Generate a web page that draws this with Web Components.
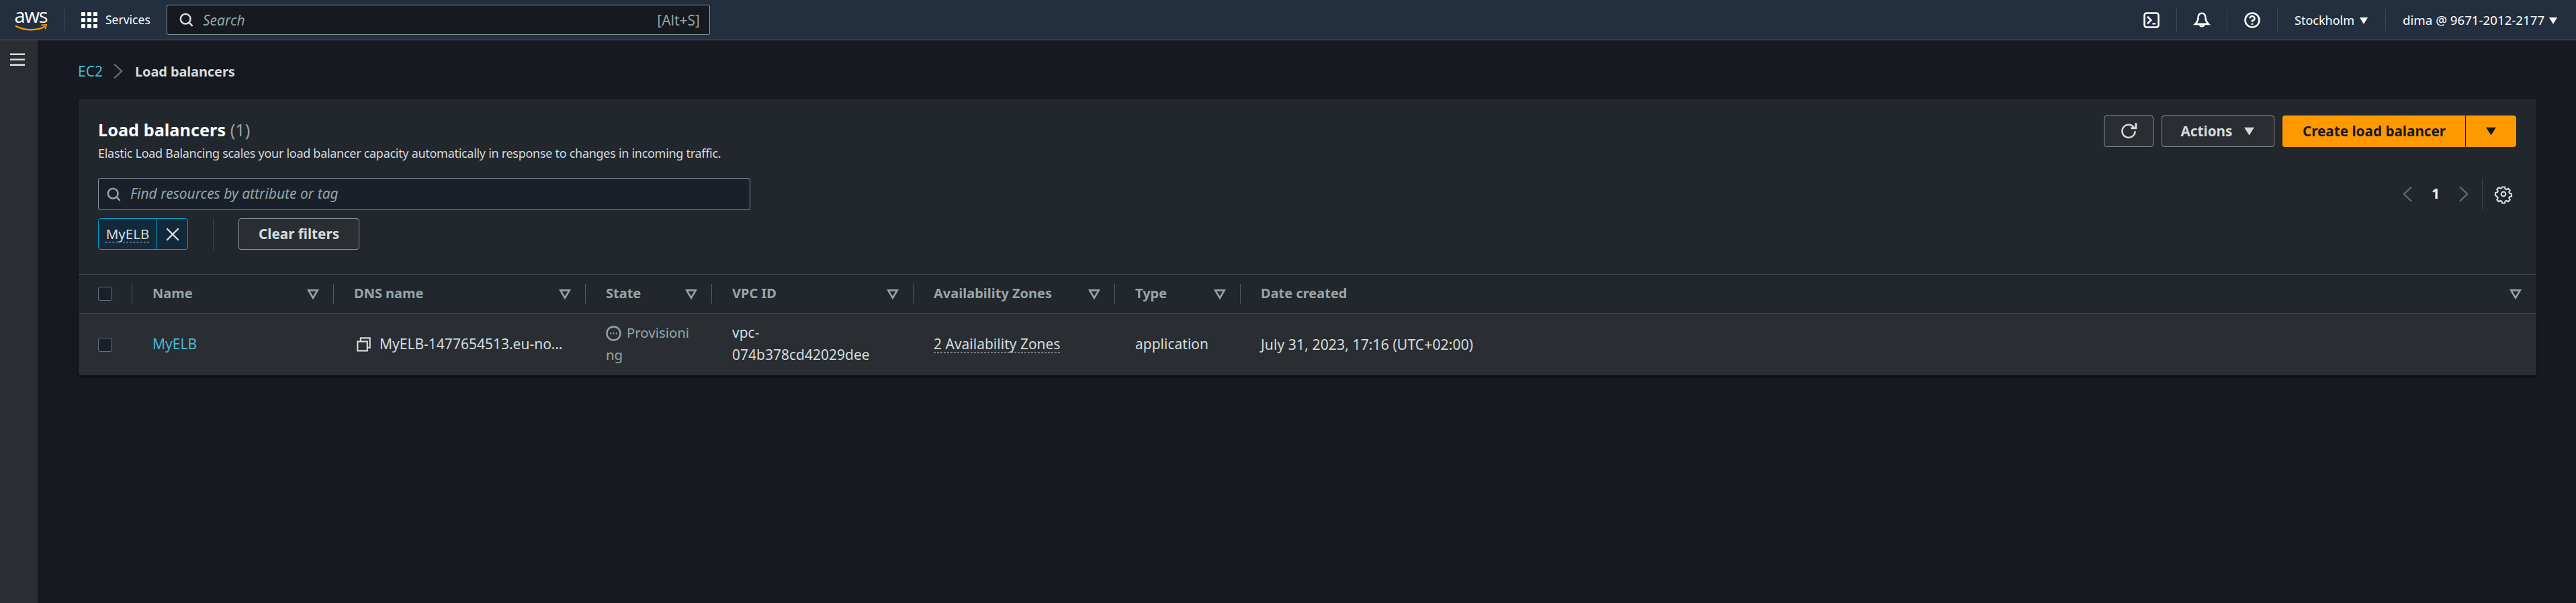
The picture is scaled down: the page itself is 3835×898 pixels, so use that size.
<!DOCTYPE html>
<html><head><meta charset="utf-8"><title>Load balancers</title>
<style>
html,body{margin:0;height:100%;background:#16191f;overflow:hidden}
body{font-family:"Noto Sans","Open Sans",sans-serif;font-size:21px;color:#d5dbdb}
</style></head><body>
<app-shell>
  <aws-topbar slot="top"></aws-topbar>
  <aws-sidebar slot="side"></aws-sidebar>
  <aws-breadcrumb></aws-breadcrumb>
  <lb-panel>
    <lb-table></lb-table>
  </lb-panel>
</app-shell>
<script>
const P={
search:'<circle cx="7" cy="7" r="5.6"/><path d="M11 11l4 4.2"/>',
refresh:'<path d="M10.2 5.2h5V.2" stroke-width="2"/><path d="M14.4 8.2A6.4 6.4 0 1 1 13.3 4.6"/>',
gear:'<path stroke-linejoin="round" d="M6.7 1h2.6l.4 1.9 1.3.6 1.7-1 1.8 1.8-1 1.7.6 1.3 1.9.4v2.6l-1.9.4-.6 1.3 1 1.7-1.8 1.8-1.7-1-1.3.6-.4 1.9H6.7l-.4-1.9-1.3-.6-1.7 1-1.8-1.8 1-1.7-.6-1.3L0 9.3V6.7l1.9-.4.6-1.3-1-1.7 1.8-1.8 1.7 1 1.3-.6z"/><circle cx="8" cy="8" r="2.2"/>',
copy:'<path d="M1 5h11v10.5H1z"/><path d="M4.5 5V1H15v11h-3"/>',
progress:'<circle cx="8" cy="8" r="7"/><path d="M4.4 8h1.3M7.35 8h1.3M10.3 8h1.3" stroke-width="1.7"/>',
close:'<path d="M1 1l14 14M15 1L1 15"/>',
left:'<path d="M12 1L4.5 8l7.5 7"/>',
right:'<path d="M4 1l7.5 7-7.5 7"/>',
sort:'<path d="M2 3h12L8 13z"/>',
caret:'<path d="M1 3.5h14L8 14.5z" fill="currentColor" stroke="none"/>',
menu:'<path d="M0 2h16M0 7.8h16M0 13.6h16"/>',
terminal:'<rect x="1" y="1" width="14" height="14" rx="2"/><path d="M4 4.5L7.5 8 4 11.5M9 11.5h3"/>',
bell:'<path d="M8 1.2C5.5 1.2 4.4 3.2 4.4 5.5c0 2.5-.8 4.2-3 6.4h13.2c-2.2-2.2-3-3.9-3-6.4 0-2.3-1.1-4.3-3.6-4.3z"/><path d="M5.8 12a2.2 2.2 0 0 0 4.4 0"/>',
help:'<circle cx="8" cy="8" r="7"/><path d="M5.7 6.2A2.3 2.3 0 1 1 8 8.6v1.2"/><path d="M8 11.2v1.4"/>',
grid:'<g fill="currentColor" stroke="none"><rect x="0" y="0" width="4" height="4" rx=".6"/><rect x="6" y="0" width="4" height="4" rx=".6"/><rect x="12" y="0" width="4" height="4" rx=".6"/><rect x="0" y="6" width="4" height="4" rx=".6"/><rect x="6" y="6" width="4" height="4" rx=".6"/><rect x="12" y="6" width="4" height="4" rx=".6"/><rect x="0" y="12" width="4" height="4" rx=".6"/><rect x="6" y="12" width="4" height="4" rx=".6"/><rect x="12" y="12" width="4" height="4" rx=".6"/></g>'
};
class AwsIcon extends HTMLElement{
  connectedCallback(){
    if(this.shadowRoot)return;
    const n=this.getAttribute('name'),s=this.getAttribute('size')||21,w=this.getAttribute('stroke')||2;
    const sw=16*w/s;
    this.attachShadow({mode:'open'}).innerHTML=`<style>:host{display:inline-flex;flex:none;width:${s}px;height:${s}px}svg{width:100%;height:100%;display:block;overflow:visible}</style><svg viewBox="0 0 16 16" fill="none" stroke="currentColor" stroke-width="${sw}">${P[n]}</svg>`;
  }
}
customElements.define('aws-icon',AwsIcon);

class AppShell extends HTMLElement{
  constructor(){super();this.attachShadow({mode:'open'}).innerHTML=`<style>
  :host{display:flex;flex-direction:column;height:100vh;width:100vw}
  .body{display:flex;flex:1;min-height:0}
  main{flex:1;min-width:0;padding:0 59px 0 61px;box-sizing:border-box}
  </style><slot name="top"></slot><div class="body"><slot name="side"></slot><main><slot></slot></main></div>`}
}
customElements.define('app-shell',AppShell);

class AwsTopbar extends HTMLElement{
  constructor(){super();this.attachShadow({mode:'open'}).innerHTML=`<style>
  :host{display:flex;align-items:center;height:59px;border-bottom:1px solid #545b64;background:#232f3e;color:#fff;font-size:17.5px;flex:none;box-sizing:content-box}
  .logo{width:48px;margin-left:22px;margin-right:25px;height:34px;display:flex;flex-direction:column;align-items:center}
  .logo span{font:400 29px/26px "Open Sans",sans-serif;letter-spacing:-1.2px;color:#fff;height:24px;margin-top:-3px}
  .logo svg{width:48px;height:10px;display:block;margin-top:2px}
  .sep{width:1px;height:34px;background:#414750;flex:none}
  .svc{display:flex;align-items:center;gap:12px;margin-left:25px;width:102px}
  .svc span{width:66px;white-space:nowrap;padding-bottom:1px}
  .search{display:flex;align-items:center;width:809px;height:45px;box-sizing:border-box;margin-left:25px;background:#16191f;border:1px solid #879596;border-radius:3px;padding:0 14px 0 18px}
  .search aws-icon{color:#d5dbdb;margin-right:14px}
  .search i{color:#95a5a6;flex:1;font-size:21px}
  .search b{font-weight:400;color:#95a5a6;font-size:21px}
  .right{margin-left:auto;display:flex;align-items:center}
  .it{display:flex;align-items:center;padding:0 25px;height:34px;border-right:1px solid #414750;white-space:nowrap;gap:8px}
  .it.st span{width:88px;font-size:18px}
  .it.me span{width:209px;font-size:18.7px}
  .it:last-child{border:0;padding:0 27px 0 25px}
  </style>
  <div class="logo"><span>aws</span><svg viewBox="0 0 48 10"><path d="M1 2.5C14 10 33 10 45 3.5" fill="none" stroke="#f90" stroke-width="2.4"/><path d="M39.5 1.5L47 .8 45.5 7.5" fill="none" stroke="#f90" stroke-width="1.8"/></svg></div>
  <div class="sep"></div>
  <div class="svc"><aws-icon name="grid" size="24"></aws-icon><span>Services</span></div>
  <div class="search"><aws-icon name="search" size="21" stroke="2.5"></aws-icon><i>Search</i><b>[Alt+S]</b></div>
  <div class="right">
    <div class="it"><aws-icon name="terminal" size="24" stroke="2.6"></aws-icon></div>
    <div class="it"><aws-icon name="bell" size="24" stroke="2.6"></aws-icon></div>
    <div class="it"><aws-icon name="help" size="24" stroke="2.6"></aws-icon></div>
    <div class="it st"><span>Stockholm</span><aws-icon name="caret" size="14"></aws-icon></div>
    <div class="it me"><span>dima @ 9671-2012-2177</span><aws-icon name="caret" size="14"></aws-icon></div>
  </div>`}
}
customElements.define('aws-topbar',AwsTopbar);

class AwsSidebar extends HTMLElement{
  constructor(){super();this.attachShadow({mode:'open'}).innerHTML=`<style>
  :host{display:block;width:56px;flex:none;background:#2a2e33;color:#d5dbdb;box-sizing:border-box;padding:18px 0 0 15px;height:100%}
  </style><aws-icon name="menu" size="22" stroke="2.7"></aws-icon>`}
}
customElements.define('aws-sidebar',AwsSidebar);

class AwsBreadcrumb extends HTMLElement{
  constructor(){super();this.attachShadow({mode:'open'}).innerHTML=`<style>
  :host{display:flex;align-items:center;height:87px;margin-left:-1px;box-sizing:border-box;padding-top:5px;font-size:21px}
  a{color:#44b9d6;width:36px;white-space:nowrap}
  aws-icon{color:#687078;margin:0 13.5px 0 11.5px}
  b{color:#d5dbdb;font-weight:700;font-size:20px;letter-spacing:-.12px}
  </style><a>EC2</a><aws-icon name="right" size="24" stroke="2.2"></aws-icon><b>Load balancers</b>`}
}
customElements.define('aws-breadcrumb',AwsBreadcrumb);

class AwsButton extends HTMLElement{
  constructor(){super();this.attachShadow({mode:'open'}).innerHTML=`<style>
  :host{display:inline-flex;align-items:center;justify-content:center;box-sizing:border-box;height:47px;border:1px solid #879596;border-radius:4px;background:#2a2e33;color:#d5dbdb;font-weight:700;font-size:20.7px;white-space:nowrap;gap:17px;padding-bottom:2px}
  :host([primary]){background:#f90;border-color:#f90;color:#16191f}
  </style><slot></slot>`}
}
customElements.define('aws-button',AwsButton);

class LbPanel extends HTMLElement{
  constructor(){super();this.attachShadow({mode:'open'}).innerHTML=`<style>
  :host{display:block;background:#22262d;box-shadow:0 1px 2px #0b0d10;color:#d5dbdb}
  .head{display:flex;justify-content:space-between;padding:25px 30px 0 29px;height:118px;box-sizing:border-box}
  h1{margin:0;font-size:25.3px;line-height:43px;font-weight:700;color:#fafafa}
  h1 span{font-weight:400;color:#95a5a6}
  p{margin:0;line-height:26px;font-size:18px;letter-spacing:-.29px;color:#d5dbdb}
  .actions{display:flex;align-items:flex-start;gap:12px}
  .split{display:flex}
  .filter{display:flex;justify-content:space-between;padding:0 30px 0 29px;height:48px}
  .input{width:971px;height:48px;box-sizing:border-box;display:flex;align-items:center;gap:14px;padding:0 12px;background:#1a2029;border:1px solid #879596;border-radius:3px;color:#95a5a6}
  .input i{font-size:21px;padding-bottom:2px}
  .pager{display:flex;align-items:center;height:47px}
  .pager .d{width:1px;height:47px;background:#414750;margin:0 19px 0 15px}
  .pager .n{font-weight:700;color:#fafafa;width:60px;text-align:center;font-size:21px;padding-bottom:2px}
  .pager aws-icon{color:#687078}
  .pager aws-icon[name=gear]{color:#d5dbdb;margin-right:7px}
  .chips{display:flex;align-items:center;padding:12px 0 36px 29px}
  .chip{display:flex;height:47px;width:134px;box-sizing:border-box;border:1px solid #00a1c9;border-radius:4px;background:#12293b;align-items:center}
  .chip u{flex:1;text-decoration:underline dashed 1px;text-underline-offset:4px;text-align:center;text-decoration-color:#d5dbdb;color:#d5dbdb;font-size:20.5px;white-space:nowrap;padding-bottom:2px}
  .chip span{width:45px;height:100%;border-left:1px solid #00a1c9;display:flex;align-items:center;justify-content:center;color:#d5dbdb}
  .v{width:1px;height:47px;background:#414750;margin:0 37px 0 37px}
  </style>
  <div class="head">
    <div><h1>Load balancers <span>(1)</span></h1><p>Elastic Load Balancing scales your load balancer capacity automatically in response to changes in incoming traffic.</p></div>
    <div class="actions">
      <aws-button style="width:74px"><aws-icon name="refresh" size="24" stroke="2.5"></aws-icon></aws-button>
      <aws-button style="width:168px">Actions<aws-icon name="caret" size="17"></aws-icon></aws-button>
      <div class="split"><aws-button primary style="width:273px;border-radius:4px 0 0 4px;border-right-color:#16191f">Create load balancer</aws-button><aws-button primary style="width:75px;border-radius:0 4px 4px 0"><aws-icon name="caret" size="17"></aws-icon></aws-button></div>
    </div>
  </div>
  <div class="filter">
    <div class="input"><aws-icon name="search" size="21" stroke="2.5"></aws-icon><i>Find resources by attribute or tag</i></div>
    <div class="pager"><aws-icon name="left" size="24" stroke="2.2"></aws-icon><span class="n">1</span><aws-icon name="right" size="24" stroke="2.2"></aws-icon><span class="d"></span><aws-icon name="gear" size="24" stroke="2.2"></aws-icon></div>
  </div>
  <div class="chips"><div class="chip"><u>MyELB</u><span><aws-icon name="close" size="20" stroke="2.4"></aws-icon></span></div><div class="v"></div><aws-button style="width:180px">Clear filters</aws-button></div>
  <slot></slot>`}
}
customElements.define('lb-panel',LbPanel);

class LbTable extends HTMLElement{
  constructor(){super();
  const cols=[['Name',300],['DNS name',375],['State',188],['VPC ID',300],['Availability Zones',300],['Type',187]];
  const head=cols.map(([t,w])=>`<div class="th" style="width:${w}px"><span>${t}</span><aws-icon name="sort" size="18" stroke="2.6"></aws-icon></div>`).join('');
  this.attachShadow({mode:'open'}).innerHTML=`<style>
  :host{display:block;color:#d5dbdb;font-size:21px}
  .hr{display:flex;height:57px;border-top:1px solid #414750;border-bottom:1px solid #414750;align-items:center;box-sizing:content-box}
  .box{width:21px;height:21px;box-sizing:border-box;border:1.5px solid #687078;border-radius:3px;background:#1a2029;flex:none}
  .ck{width:79px;padding-left:29px;box-sizing:border-box;flex:none;display:flex;align-items:center}
  .th{display:flex;align-items:center;justify-content:space-between;box-sizing:border-box;height:29px;border-left:1px solid #545b64;padding:0 21px 0 30px;font-weight:700;font-size:20px;color:#95a5a6;flex:none}
  .th span{padding-bottom:2px}
  .th aws-icon{color:#95a5a6}
  .tr{display:flex;height:92px;background:#2a2e33;align-items:center;line-height:33px;box-shadow:0 2px 2px #0b0d10}
  .td{box-sizing:border-box;padding-left:31px;flex:none;padding-bottom:2px}
  a{color:#44b9d6}
  .dns{display:flex;align-items:center;gap:13px}
  .dns aws-icon{color:#d5dbdb}
  .st{color:#95a5a6;font-size:20.4px}
  .st aws-icon{vertical-align:-5px;margin-right:8px}
  u{text-decoration:underline dashed 1px;text-underline-offset:5px}
  </style>
  <div class="hr"><div class="ck"><div class="box"></div></div>${head}<div class="th" style="flex:1;padding-right:22px"><span>Date created</span><aws-icon name="sort" size="18" stroke="2.6"></aws-icon></div></div>
  <div class="tr"><div class="ck"><div class="box"></div></div>
    <div class="td" style="width:300px"><a>MyELB</a></div>
    <div class="td dns" style="width:375px;padding-left:35px"><aws-icon name="copy" size="21" stroke="2.2"></aws-icon><span>MyELB-1477654513.eu-no…</span></div>
    <div class="td st" style="width:188px"><aws-icon name="progress" size="23" stroke="2.4"></aws-icon>Provisioni<br>ng</div>
    <div class="td" style="width:300px">vpc-<br>074b378cd42029dee</div>
    <div class="td" style="width:300px"><u>2 Availability Zones</u></div>
    <div class="td" style="width:187px">application</div>
    <div class="td" style="font-size:21.3px">July 31, 2023, 17:16 (UTC+02:00)</div>
  </div>`}
}
customElements.define('lb-table',LbTable);
</script>
</body></html>
